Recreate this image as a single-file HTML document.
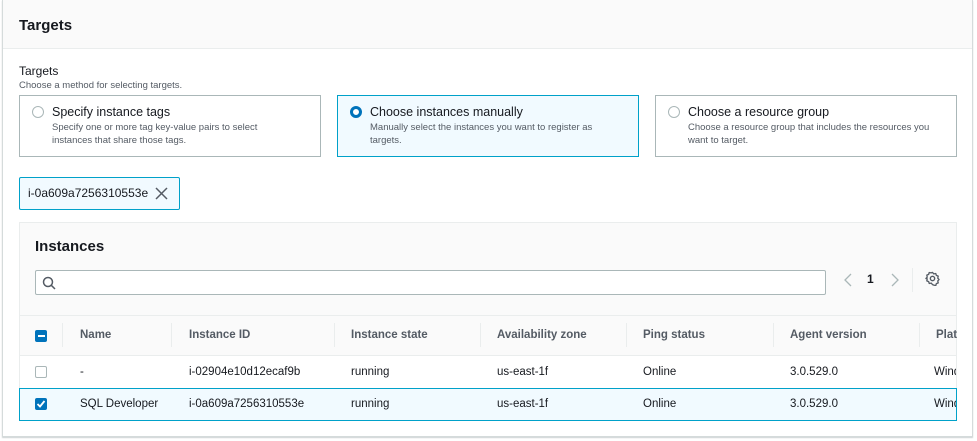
<!DOCTYPE html>
<html><head><style>
*{box-sizing:border-box;margin:0;padding:0}
body{width:977px;height:441px;background:#fff;font-family:"Liberation Sans",sans-serif;color:#16191f;position:relative;overflow:hidden}
.a{position:absolute}
.outer{left:2px;top:0;width:971px;height:437px;border:1px solid #d5dbdb;border-top:none;box-shadow:0 1px 1px rgba(0,28,36,.2)}
.hdr{left:3px;top:0;width:969px;height:49px;background:#fafafa;border-bottom:1px solid #eaeded}
.card{top:95px;width:302px;height:62px;border:1px solid #aab7b8;background:#fff}
.card.sel{border-color:#00a1c9;background:#f1faff}
.radio{position:absolute;left:12px;top:10px;width:12px;height:12px;border-radius:50%;border:1px solid #aab7b8;background:#fff}
.sel .radio{border:3.5px solid #0073bb}
.ct{position:absolute;left:32px;top:9px;font-size:12.5px}
.cd{position:absolute;left:32px;top:25px;font-size:9.5px;color:#545b64;line-height:13px}
.th{top:329px;font-size:11.5px;font-weight:bold;color:#545b64}
.td{font-size:11.5px}
.sep{top:323px;width:1px;height:24px;background:#eaeded}
.cb{width:12px;height:12px;border-radius:2px}
</style></head><body>
<div class="a outer"></div>
<div class="a hdr"></div>
<div class="a" style="left:19px;top:17px;font-size:15px;font-weight:bold">Targets</div>
<div class="a" style="left:19px;top:64px;font-size:12px">Targets</div>
<div class="a" style="left:19px;top:80px;font-size:9.5px;color:#545b64">Choose a method for selecting targets.</div>

<div class="a card" style="left:19px"><div class="radio"></div><div class="ct">Specify instance tags</div><div class="cd">Specify one or more tag key-value pairs to select<br>instances that share those tags.</div></div>
<div class="a card sel" style="left:337px"><div class="radio"></div><div class="ct">Choose instances manually</div><div class="cd">Manually select the instances you want to register as<br>targets.</div></div>
<div class="a card" style="left:655px"><div class="radio"></div><div class="ct">Choose a resource group</div><div class="cd">Choose a resource group that includes the resources you<br>want to target.</div></div>

<div class="a" style="left:19px;top:177px;width:161px;height:33px;border:1px solid #00a1c9;background:#f1faff;border-radius:2px"></div>
<div class="a" style="left:28px;top:186px;font-size:12px">i-0a609a7256310553e</div>
<svg class="a" style="left:155px;top:187px" width="13" height="13" viewBox="0 0 13 13"><path d="M1 1L12 12M12 1L1 12" stroke="#545b64" stroke-width="1.5"/></svg>

<div class="a" style="left:19px;top:222px;width:938px;height:199px;border:1px solid #eaeded;background:#fafafa"></div>
<div class="a" style="left:35px;top:238px;font-size:15px;font-weight:bold">Instances</div>
<div class="a" style="left:35px;top:270px;width:791px;height:25px;border:1px solid #aab7b8;background:#fff;border-radius:2px"></div>
<svg class="a" style="left:42px;top:276px" width="14" height="14" viewBox="0 0 14 14"><circle cx="6" cy="6" r="4.5" fill="none" stroke="#545b64" stroke-width="1.5"/><path d="M9.3 9.3L13 13" stroke="#545b64" stroke-width="1.5"/></svg>
<svg class="a" style="left:843px;top:272px" width="10" height="16" viewBox="0 0 10 16"><path d="M8 2L2 8L8 14" fill="none" stroke="#aab7b8" stroke-width="1.3"/></svg>
<div class="a" style="left:867px;top:272px;font-size:12px;font-weight:bold">1</div>
<svg class="a" style="left:890px;top:272px" width="10" height="16" viewBox="0 0 10 16"><path d="M2 2L8 8L2 14" fill="none" stroke="#aab7b8" stroke-width="1.3"/></svg>
<div class="a" style="left:912px;top:268px;width:1px;height:24px;background:#eaeded"></div>
<svg class="a" style="left:925px;top:271px" width="15" height="15" viewBox="0 0 16 16"><circle cx="8" cy="8" r="2.3" fill="none" stroke="#545b64" stroke-width="1.5"/><path d="M8 1.5l1.4 1.6 2.1-.4.6 2 2 .8-.5 2.1 1.4 1.5-1.4 1.5.5 2.1-2 .8-.6 2-2.1-.4L8 14.5l-1.4-1.6-2.1.4-.6-2-2-.8.5-2.1L1 8l1.4-1.5-.5-2.1 2-.8.6-2 2.1.4z" fill="none" stroke="#545b64" stroke-width="1.4" stroke-linejoin="round"/></svg>

<div class="a" style="left:20px;top:315px;width:936px;height:1px;background:#eaeded"></div>
<div class="a cb" style="left:35px;top:330px;background:#0073bb"><div style="position:absolute;left:2.5px;top:5px;width:7px;height:2px;background:#fff"></div></div>
<div class="a sep" style="left:62px"></div><div class="a sep" style="left:171px"></div><div class="a sep" style="left:334px"></div><div class="a sep" style="left:480px"></div><div class="a sep" style="left:626px"></div><div class="a sep" style="left:773px"></div><div class="a sep" style="left:919px"></div>
<div class="a th" style="left:80px">Name</div>
<div class="a th" style="left:189px">Instance ID</div>
<div class="a th" style="left:351px">Instance state</div>
<div class="a th" style="left:497px">Availability zone</div>
<div class="a th" style="left:643px">Ping status</div>
<div class="a th" style="left:790px">Agent version</div>
<div class="a th" style="left:936px">Plat</div>

<div class="a" style="left:20px;top:355px;width:936px;height:33px;background:#fff;border-top:1px solid #eaeded"></div>
<div class="a cb" style="left:35px;top:366px;border:1px solid #aab7b8;background:#fff"></div>
<div class="a td" style="left:80px;top:366px">-</div>
<div class="a td" style="left:189px;top:366px">i-02904e10d12ecaf9b</div>
<div class="a td" style="left:351px;top:366px">running</div>
<div class="a td" style="left:497px;top:366px">us-east-1f</div>
<div class="a td" style="left:643px;top:366px">Online</div>
<div class="a td" style="left:790px;top:366px">3.0.529.0</div>
<div class="a td" style="left:934px;top:366px;width:22px;overflow:hidden;white-space:nowrap">Wind</div>

<div class="a" style="left:19px;top:388px;width:938px;height:33px;background:#f1faff;border:1px solid #00a1c9"></div>
<div class="a cb" style="left:35px;top:398px;background:#0073bb"><svg width="12" height="12" viewBox="0 0 12 12" style="position:absolute;left:0;top:0"><path d="M2.5 6L5 8.5L9.5 3" fill="none" stroke="#fff" stroke-width="1.8"/></svg></div>
<div class="a td" style="left:80px;top:398px">SQL Developer</div>
<div class="a td" style="left:189px;top:398px">i-0a609a7256310553e</div>
<div class="a td" style="left:351px;top:398px">running</div>
<div class="a td" style="left:497px;top:398px">us-east-1f</div>
<div class="a td" style="left:643px;top:398px">Online</div>
<div class="a td" style="left:790px;top:398px">3.0.529.0</div>
<div class="a td" style="left:934px;top:398px;width:22px;overflow:hidden;white-space:nowrap">Wind</div>
</body></html>
